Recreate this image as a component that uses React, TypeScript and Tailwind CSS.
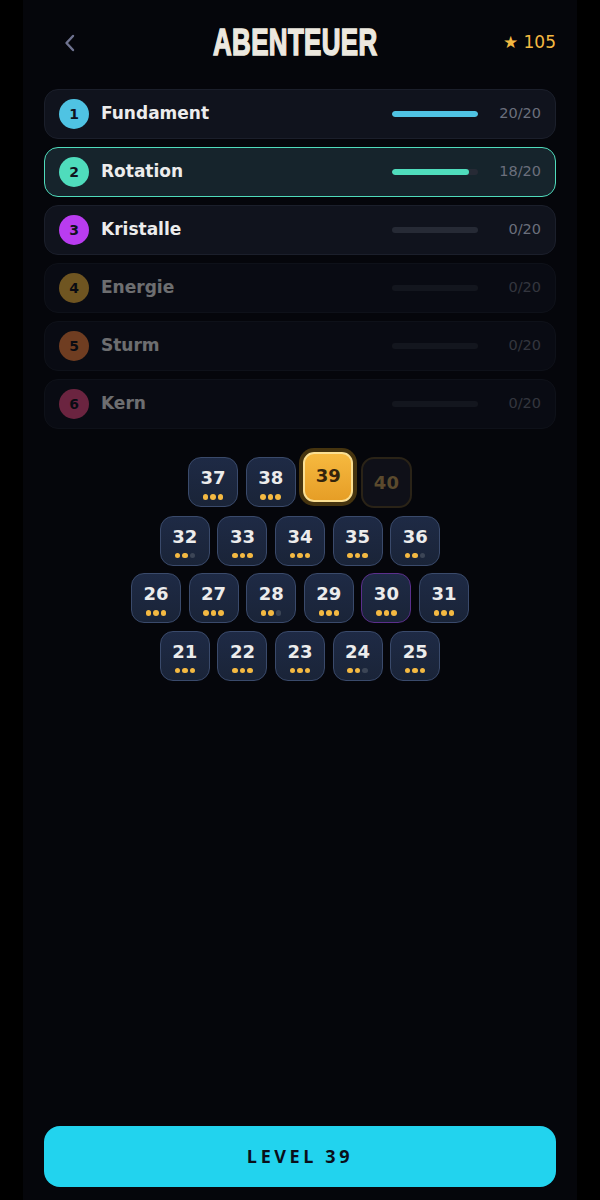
const chapters = [
  { n: 1, name: "Fundament", done: 20, color: "bg-[#4fc3e3]", locked: false, active: false },
  { n: 2, name: "Rotation", done: 18, color: "bg-[#4fdcbc]", locked: false, active: true },
  { n: 3, name: "Kristalle", done: 0, color: "bg-[#b93cf0]", locked: false, active: false },
  { n: 4, name: "Energie", done: 0, color: "bg-[#f0b53c]", locked: true, active: false },
  { n: 5, name: "Sturm", done: 0, color: "bg-[#f0803c]", locked: true, active: false },
  { n: 6, name: "Kern", done: 0, color: "bg-[#e84a80]", locked: true, active: false },
];

type Level = { n: number; stars?: number; kind?: "current" | "locked"; boss?: boolean };

const rows: Level[][] = [
  [{ n: 37, stars: 3 }, { n: 38, stars: 3 }, { n: 39, kind: "current" }, { n: 40, kind: "locked" }],
  [{ n: 32, stars: 2 }, { n: 33, stars: 3 }, { n: 34, stars: 3 }, { n: 35, stars: 3 }, { n: 36, stars: 2 }],
  [
    { n: 26, stars: 3 },
    { n: 27, stars: 3 },
    { n: 28, stars: 2 },
    { n: 29, stars: 3 },
    { n: 30, stars: 3, boss: true },
    { n: 31, stars: 3 },
  ],
  [{ n: 21, stars: 3 }, { n: 22, stars: 3 }, { n: 23, stars: 3 }, { n: 24, stars: 2 }, { n: 25, stars: 3 }],
];

function ChapterRow({ chapter }: { chapter: (typeof chapters)[number] }) {
  return (
    <div
      className={
        "flex h-[50px] items-center rounded-[14px] border pl-[14px] pr-[14px] " +
        (chapter.active ? "border-[#4fdcbc] bg-[#16242c] " : "border-[#1b1f2b] bg-[#10131d] ") +
        (chapter.locked ? "opacity-45" : "")
      }
    >
      <div
        className={
          "flex h-[30px] w-[30px] shrink-0 items-center justify-center rounded-full text-[14px] font-bold text-[#10131d] " +
          chapter.color
        }
      >
        {chapter.n}
      </div>
      <span className="ml-[12px] flex-1 text-[17px] font-bold text-[#ececec]">{chapter.name}</span>
      <div className="h-[6px] w-[86px] overflow-hidden rounded-full bg-[#262a35]">
        <div
          className={"h-full rounded-full " + chapter.color}
          style={{ width: `${(chapter.done / 20) * 100}%` }}
        />
      </div>
      <span className="w-[63px] text-right text-[14.5px] text-[#6b6f7c]">{chapter.done}/20</span>
    </div>
  );
}

function Tile({ level }: { level: Level }) {
  if (level.kind === "current") {
    return (
      <div className="flex h-[50px] w-[50px] -translate-y-[5px] items-center justify-center rounded-[11px] border-2 border-[#fbdf92] bg-gradient-to-b from-[#f6b93f] to-[#e69e26] pb-[4px] text-[18px] font-bold text-[#33240c] shadow-[0_0_0_4px_#46340f]">
        {level.n}
      </div>
    );
  }
  if (level.kind === "locked") {
    return (
      <div className="flex h-[51px] w-[51px] items-center justify-center rounded-[13px] border-2 border-[#2a2317] bg-[#0f1018] text-[18px] font-bold text-[#5b4a2d]">
        {level.n}
      </div>
    );
  }
  return (
    <div
      className={
        "flex h-[50px] w-[50px] flex-col items-center rounded-[13px] border bg-gradient-to-b from-[#1e2a45] to-[#1a2438] " +
        (level.boss ? "border-[#5b2f8c]" : "border-[#3a4a6b]")
      }
    >
      <span className="mt-[9px] text-[18px] leading-[22px] font-bold text-[#ececec]">{level.n}</span>
      <div className="mt-[5px] flex gap-[2px]">
        {[0, 1, 2].map((i) => (
          <span
            key={i}
            className={
              "h-[5.5px] w-[5.5px] rounded-full " + (i < (level.stars ?? 0) ? "bg-[#f4b942]" : "bg-[#3c4556]")
            }
          />
        ))}
      </div>
    </div>
  );
}

export default function App() {
  return (
    <div className="flex h-[1200px] w-[600px] justify-center overflow-hidden bg-black font-['DejaVu_Sans',sans-serif]">
      <div className="flex w-[554px] flex-col bg-[#05060b] px-[21px] pb-[13px]">
        <header className="flex h-[89px] items-center justify-between pb-[4px]">
          <button className="ml-[14px] w-[30px] text-[#6f7390]">
            <svg width="24" height="24" viewBox="0 0 24 24" fill="none" stroke="currentColor" strokeWidth="2.4">
              <path d="M15 5 L8.5 12 L15 19" strokeLinecap="round" strokeLinejoin="round" />
            </svg>
          </button>
          <h1 className="origin-center scale-x-[0.72] font-['Liberation_Sans',sans-serif] text-[36px] font-bold tracking-[0.5px] text-[#ece8df] [-webkit-text-stroke:1.5px_#ece8df]">
            ABENTEUER
          </h1>
          <span className="text-[17px] text-[#f4b942]">★ 105</span>
        </header>

        <div className="flex flex-col gap-[8px]">
          {chapters.map((c) => (
            <ChapterRow key={c.n} chapter={c} />
          ))}
        </div>

        <div className="mt-[28px] flex flex-col items-center gap-[7.6px]">
          {rows.map((row) => (
            <div key={row[0].n} className="flex gap-[7.6px]">
              {row.map((l) => (
                <Tile key={l.n} level={l} />
              ))}
            </div>
          ))}
        </div>

        <button className="mt-auto h-[61px] rounded-[16px] bg-[#22d3ee] font-['Open_Sans',sans-serif] text-[18px] font-bold tracking-[3.6px] text-[#0a0f1a]">
          LEVEL 39
        </button>
      </div>
    </div>
  );
}
